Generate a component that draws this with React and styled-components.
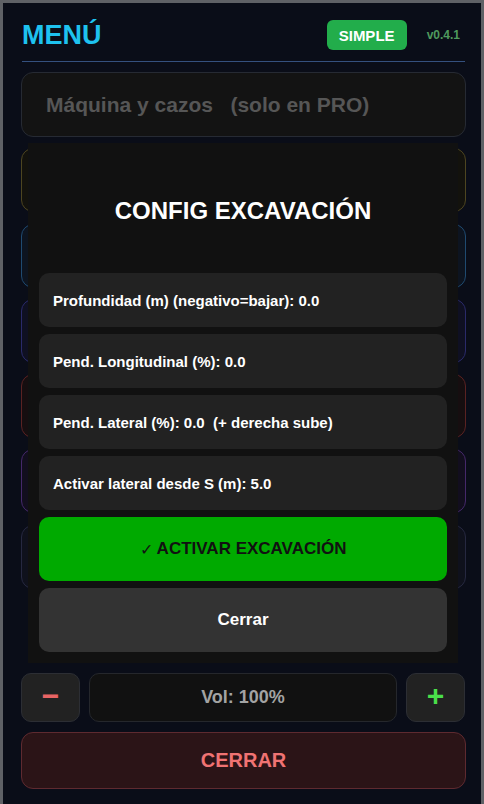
import React from "react";
import styled, { createGlobalStyle } from "styled-components";

const items = [
  { id: "exc", border: "#4d4520", bg: "#13120d" },
  { id: "rep", border: "#1f4a70", bg: "#0d1420" },
  { id: "pts", border: "#2a2a6a", bg: "#0f1022" },
  { id: "del", border: "#5a2222", bg: "#160e10" },
  { id: "cfg", border: "#45286a", bg: "#120e1e" },
  { id: "hlp", border: "#262840", bg: "#0f111c" },
];

const fields = [
  "Profundidad (m) (negativo=bajar): 0.0",
  "Pend. Longitudinal (%): 0.0",
  "Pend. Lateral (%): 0.0  (+ derecha sube)",
  "Activar lateral desde S (m): 5.0",
];

function App() {
  return (
    <>
      <GlobalStyle />
      <Panel>
        <Header>
          <Title>MENÚ</Title>
          <HeaderRight>
            <Badge>SIMPLE</Badge>
            <Version>v0.4.1</Version>
          </HeaderRight>
        </Header>
        <List>
          <Item $border="#262a33" $bg="#131313">
            <ItemText>Máquina y cazos   (solo en PRO)</ItemText>
          </Item>
          {/* the rest of the menu sits under the modal */}
          {items.map((it) => (
            <Item key={it.id} $border={it.border} $bg={it.bg} />
          ))}
        </List>
        <VolumeRow>
          <StepButton $color="#e86464">−</StepButton>
          <VolumeDisplay>Vol: 100%</VolumeDisplay>
          <StepButton $color="#4ade4a">+</StepButton>
        </VolumeRow>
        <CloseMenu>CERRAR</CloseMenu>

        <Modal>
          <ModalTitle>CONFIG EXCAVACIÓN</ModalTitle>
          <Fields>
            {fields.map((f) => (
              <Field key={f}>{f}</Field>
            ))}
          </Fields>
          <ActionButton $bg="#00aa00" $color="#111111" $size="17px">
            <Check>✓</Check> ACTIVAR EXCAVACIÓN
          </ActionButton>
          <ActionButton $bg="#333333" $color="#ffffff" $size="17px">
            Cerrar
          </ActionButton>
        </Modal>
      </Panel>
    </>
  );
}

const GlobalStyle = createGlobalStyle`
  html, body {
    margin: 0;
    padding: 0;
    background: #5f6166;
    height: 100%;
  }
  body {
    font-family: "Liberation Sans", Arial, sans-serif;
  }
  #root {
    padding: 3px 3px 0 3px;
    box-sizing: border-box;
    height: 100%;
  }
`;

const Panel = styled.div`
  position: relative;
  box-sizing: border-box;
  min-height: 801px;
  background: #0a0d18;
  padding: 17px 15px 0 18px;
`;

const Header = styled.div`
  display: flex;
  align-items: center;
  justify-content: space-between;
  height: 30px;
  padding: 0 0 11px 0;
  margin: 0 1px 0 1px;
  border-bottom: 1px solid #34507e;
`;

const Title = styled.h1`
  margin: 0;
  font-size: 27px;
  font-weight: 700;
  color: #1ec2ef;
`;

const HeaderRight = styled.div`
  display: flex;
  align-items: center;
  gap: 20px;
  padding-right: 5px;
`;

const Badge = styled.div`
  width: 80px;
  height: 30px;
  border-radius: 6px;
  background: #22ad4b;
  color: #ffffff;
  font-size: 15px;
  font-weight: 700;
  display: flex;
  align-items: center;
  justify-content: center;
`;

const Version = styled.span`
  color: #4f9a5e;
  font-size: 12px;
  font-weight: 700;
`;

const List = styled.div`
  display: flex;
  flex-direction: column;
  gap: 11.3px;
  margin-top: 10px;
`;

const Item = styled.div`
  box-sizing: border-box;
  height: 64px;
  border-radius: 12px;
  border: 1px solid ${(p) => p.$border};
  background: ${(p) => p.$bg};
  display: flex;
  align-items: center;
  padding: 0 24px;
  &:first-child {
    height: 65px;
  }
`;

const ItemText = styled.span`
  white-space: pre;
  font-size: 21px;
  font-weight: 700;
  color: #565656;
`;

const VolumeRow = styled.div`
  display: grid;
  grid-template-columns: 59px 1fr 59px;
  gap: 9px;
  height: 49px;
  margin-top: 84px;
  padding-right: 1px;
`;

const StepButton = styled.div`
  box-sizing: border-box;
  border-radius: 10px;
  background: #222222;
  border: 1px solid #2c2e34;
  color: ${(p) => p.$color};
  font-size: 30px;
  font-weight: 700;
  display: flex;
  align-items: center;
  justify-content: center;
  padding-bottom: 3px;
`;

const VolumeDisplay = styled.div`
  box-sizing: border-box;
  border-radius: 10px;
  background: #111111;
  border: 1px solid #25272c;
  color: #a3a3a3;
  font-size: 18px;
  font-weight: 700;
  display: flex;
  align-items: center;
  justify-content: center;
`;

const CloseMenu = styled.div`
  box-sizing: border-box;
  height: 57px;
  margin-top: 10px;
  border-radius: 12px;
  background: #2b1417;
  border: 1px solid #5e2a30;
  color: #f07373;
  font-size: 20px;
  font-weight: 700;
  display: flex;
  align-items: center;
  justify-content: center;
`;

const Modal = styled.div`
  position: absolute;
  top: 140px;
  left: 25px;
  width: 430px;
  height: 520px;
  box-sizing: border-box;
  padding: 11px;
  background: #111111;
  display: flex;
  flex-direction: column;
  gap: 7px;
`;

const ModalTitle = styled.h2`
  margin: 43px 0 41px 0;
  font-size: 24px;
  line-height: 28px;
  font-weight: 700;
  color: #ffffff;
  text-align: center;
`;

const Fields = styled.div`
  display: flex;
  flex-direction: column;
  gap: 7px;
`;

const Field = styled.div`
  box-sizing: border-box;
  height: 54px;
  border-radius: 10px;
  background: #222222;
  color: #ffffff;
  font-size: 15px;
  font-weight: 700;
  white-space: pre;
  display: flex;
  align-items: center;
  padding: 0 14px;
`;

const ActionButton = styled.div`
  box-sizing: border-box;
  height: 64px;
  border-radius: 10px;
  background: ${(p) => p.$bg};
  color: ${(p) => p.$color};
  font-size: ${(p) => p.$size};
  font-weight: 700;
  display: flex;
  align-items: center;
  justify-content: center;
  white-space: pre;
`;

const Check = styled.span`
  font-weight: 400;
  font-size: 16px;
`;

export default App;
